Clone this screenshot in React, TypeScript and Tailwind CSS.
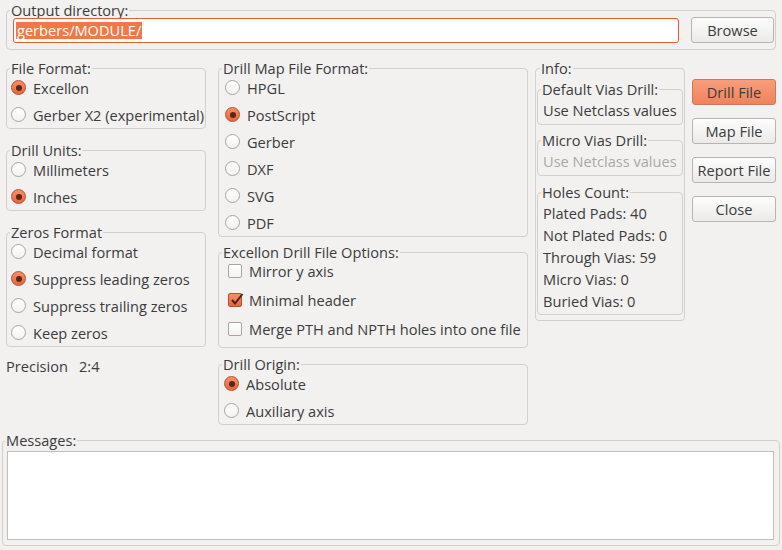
import React from 'react';
import clsx from 'clsx';

const Radio = ({ checked }: { checked?: boolean }) => (
  <span
    className={clsx(
      'w-[15px] h-[15px] rounded-full border flex items-center justify-center shrink-0',
      checked
        ? 'border-[#b5522f] bg-linear-to-b from-[#f68f69] to-[#e8643a]'
        : 'border-[#a9a49f] bg-linear-to-b from-white to-[#f3f2f1]'
    )}
  >
    {checked && <span className="w-[6px] h-[6px] rounded-full bg-[#5c2616]" />}
  </span>
);

const Check = ({ checked }: { checked?: boolean }) => (
  <span
    className={clsx(
      'relative w-[14px] h-[14px] rounded-[2px] border shrink-0',
      checked
        ? 'border-[#b5522f] bg-linear-to-b from-[#f68f69] to-[#e8643a]'
        : 'border-[#a9a49f] bg-linear-to-b from-white to-[#f3f2f1]'
    )}
  >
    {checked && (
      <svg className="absolute left-[1px] top-[-2px]" width="14" height="14" viewBox="0 0 14 14">
        <path d="M2 8 L5 11.5 L12.5 2" fill="none" stroke="#4f2214" strokeWidth="2" />
      </svg>
    )}
  </span>
);

interface OptionProps {
  label: string;
  checked?: boolean;
  pad: string;
}

const Option = ({ label, checked, pad }: OptionProps) => (
  <div className={clsx('h-[27px] flex items-center gap-[7px]', pad)}>
    <Radio checked={checked} />
    <span>{label}</span>
  </div>
);

const CheckOption = ({ label, checked }: { label: string; checked?: boolean }) => (
  <div className="h-[29px] flex items-center gap-[7px] pl-[9px]">
    <Check checked={checked} />
    <span>{label}</span>
  </div>
);

interface GroupProps {
  title: string;
  className?: string;
  legendClass?: string;
  children: React.ReactNode;
}

const Group = ({ title, className, legendClass = 'ml-[3px]', children }: GroupProps) => (
  <fieldset className={clsx('min-w-0 m-0 p-0 border border-[#d3cfcb] rounded-[4px]', className)}>
    <legend className={clsx('px-[1px] leading-[12px]', legendClass)}>{title}</legend>
    {children}
  </fieldset>
);

const Button = ({ children, primary }: { children: React.ReactNode; primary?: boolean }) => (
  <button
    className={clsx(
      'h-[26px] w-full rounded-[3px] border leading-none text-[#3c3c3c]',
      primary
        ? 'border-[#c97a5c] bg-linear-to-b from-[#f89d7b] to-[#f1825c]'
        : 'border-[#b9b4af] bg-linear-to-b from-[#fdfdfd] to-[#ebeae8]'
    )}
  >
    {children}
  </button>
);

export default function App() {
  return (
    <div className="w-[782px] h-[550px] overflow-hidden bg-[#f2f1f0] text-[#3c3c3c] text-[14.6px] leading-[18px] font-['Open_Sans',sans-serif] px-[2px] pt-[4px]">
      {/* output directory */}
      <Group
        title="Output directory:"
        legendClass="-ml-[3px]"
        className="mx-[4px] pl-[6px] pr-[1px] pb-[6px]"
      >
        <div className="flex items-center gap-[12px] pt-[1px]">
          <div className="flex-1 h-[25px] rounded-[3px] border border-[#e0602f] bg-white flex items-center px-[2px]">
            <span className="bg-[#f07746] text-white leading-[17px] px-[1px]">gerbers/MODULE/</span>
          </div>
          <div className="w-[83px]">
            <Button>Browse</Button>
          </div>
        </div>
      </Group>

      <div className="mx-[4px] mt-[12px] flex items-start">
        {/* left column */}
        <div className="w-[200px] flex flex-col">
          <Group title="File Format:">
            <Option pad="pl-[4px]" label="Excellon" checked />
            <Option pad="pl-[4px]" label="Gerber X2 (experimental)" />
          </Group>
          <Group title="Drill Units:" className="mt-[15px]">
            <Option pad="pl-[4px]" label="Millimeters" />
            <Option pad="pl-[4px]" label="Inches" checked />
          </Group>
          <Group title="Zeros Format" className="mt-[15px]">
            <Option pad="pl-[4px]" label="Decimal format" />
            <Option pad="pl-[4px]" label="Suppress leading zeros" checked />
            <Option pad="pl-[4px]" label="Suppress trailing zeros" />
            <Option pad="pl-[4px]" label="Keep zeros" />
          </Group>
          <div className="mt-[9px] h-[20px] flex items-center">
            <span className="w-[73px]">Precision</span>
            <span>2:4</span>
          </div>
        </div>

        {/* middle column */}
        <div className="w-[310px] ml-[12px] flex flex-col">
          <Group title="Drill Map File Format:">
            <Option pad="pl-[6px]" label="HPGL" />
            <Option pad="pl-[6px]" label="PostScript" checked />
            <Option pad="pl-[6px]" label="Gerber" />
            <Option pad="pl-[6px]" label="DXF" />
            <Option pad="pl-[6px]" label="SVG" />
            <Option pad="pl-[6px]" label="PDF" />
          </Group>
          <Group title="Excellon Drill File Options:" className="mt-[9px] pb-[4px]">
            <div className="-mt-[2px]">
              <CheckOption label="Mirror y axis" />
              <CheckOption label="Minimal header" checked />
              <CheckOption label="Merge PTH and NPTH holes into one file" />
            </div>
          </Group>
          <Group title="Drill Origin:" className="mt-[10px]">
            <Option pad="pl-[5px]" label="Absolute" checked />
            <Option pad="pl-[5px]" label="Auxiliary axis" />
          </Group>
        </div>

        {/* info column */}
        <div className="w-[150px] ml-[7px]">
          <Group title="Info:" className="px-[1px] pb-[5px]">
            <Group title="Default Vias Drill:" className="mt-[9px] pb-[1px]">
              <div className="mt-[2px] h-[26px] flex items-center pl-[5px]">Use Netclass values</div>
            </Group>
            <Group title="Micro Vias Drill:" className="mt-[9px] pb-[1px]">
              <div className="mt-[2px] h-[26px] flex items-center pl-[5px] text-[#aca8a4]">Use Netclass values</div>
            </Group>
            <Group title="Holes Count:" className="mt-[10px] pb-[2px]">
              <div className="mt-[4px] pl-[5px]">
                <div className="h-[22px] flex items-center">Plated Pads: 40</div>
                <div className="h-[22px] flex items-center">Not Plated Pads: 0</div>
                <div className="h-[22px] flex items-center">Through Vias: 59</div>
                <div className="h-[22px] flex items-center">Micro Vias: 0</div>
                <div className="h-[22px] flex items-center">Buried Vias: 0</div>
              </div>
            </Group>
          </Group>
        </div>

        {/* buttons */}
        <div className="w-[84px] ml-[7px] mt-[17px] flex flex-col gap-[13px]">
          <Button primary>Drill File</Button>
          <Button>Map File</Button>
          <Button>Report File</Button>
          <Button>Close</Button>
        </div>
      </div>

      {/* messages */}
      <Group
        title="Messages:"
        legendClass="-ml-[2px]"
        className="mt-[9px] pl-[4px] pr-[5px] pb-[5px]"
      >
        <div className="mt-[5px] h-[89px] bg-white border border-[#c2beba]" />
      </Group>
    </div>
  );
}
